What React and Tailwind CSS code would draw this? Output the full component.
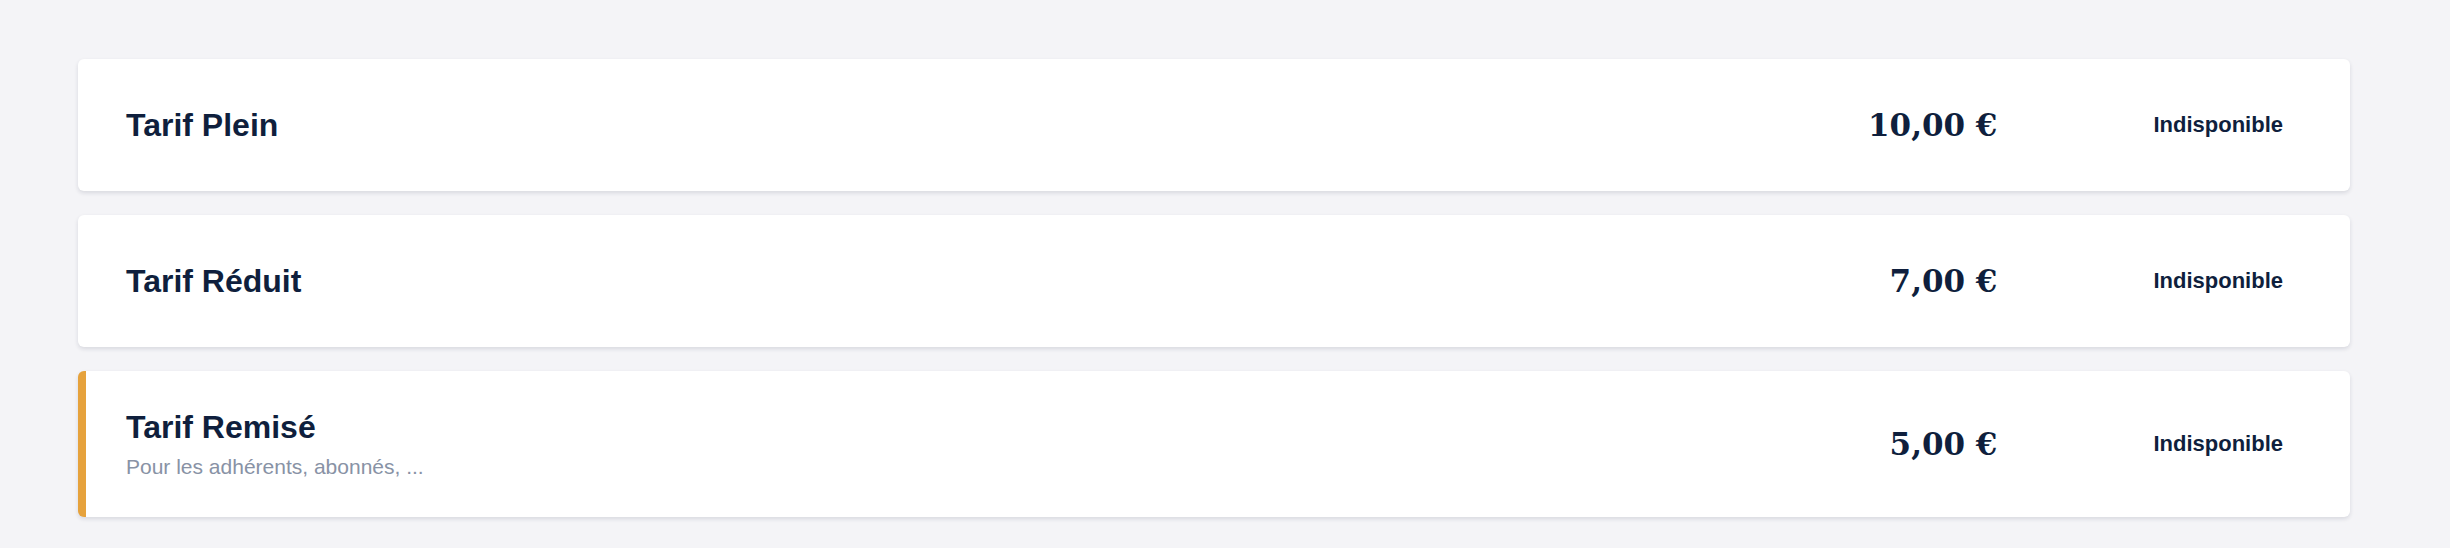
const TARIFS = [
  { id: 'plein', label: 'Tarif Plein', price: '10,00 €' },
  { id: 'reduit', label: 'Tarif Réduit', price: '7,00 €' },
  { id: 'remise', label: 'Tarif Remisé', price: '5,00 €', hint: 'Pour les adhérents, abonnés, ...', highlight: true },
];

function TarifRow({ tarif }) {
  const base =
    'flex items-center rounded-md bg-white pr-[67px] shadow-[0_2px_4px_rgba(20,30,60,0.13)]';
  const variant = tarif.highlight
    ? 'h-[146px] border-l-[8px] border-[#e6a23c] pl-10'
    : 'h-[132px] pl-12';

  return (
    <div className={`${base} ${variant}`}>
      <div className="flex flex-1 flex-col">
        <h2 className="text-[32px] font-bold leading-[40px] text-[#0f1f3d]">{tarif.label}</h2>
        {tarif.hint && (
          <p className="mt-1.5 text-[21px] leading-[28px] text-[#8892a5]">{tarif.hint}</p>
        )}
      </div>
      <span className="font-['DejaVu_Serif',serif] text-[31px] font-bold leading-[40px] text-[#0f1f3d]">
        {tarif.price}
      </span>
      <span className="ml-[156px] text-[22px] font-bold leading-[28px] text-[#0f1f3d]">
        Indisponible
      </span>
    </div>
  );
}

export default function App() {
  return (
    <div className="min-h-[548px] w-full bg-[#f4f4f7] pt-[59px] pl-[78px] pr-[100px] font-['Liberation_Sans',Arial,sans-serif]">
      <div className="flex flex-col gap-6">
        {TARIFS.map((t) => (
          <TarifRow key={t.id} tarif={t} />
        ))}
      </div>
    </div>
  );
}
